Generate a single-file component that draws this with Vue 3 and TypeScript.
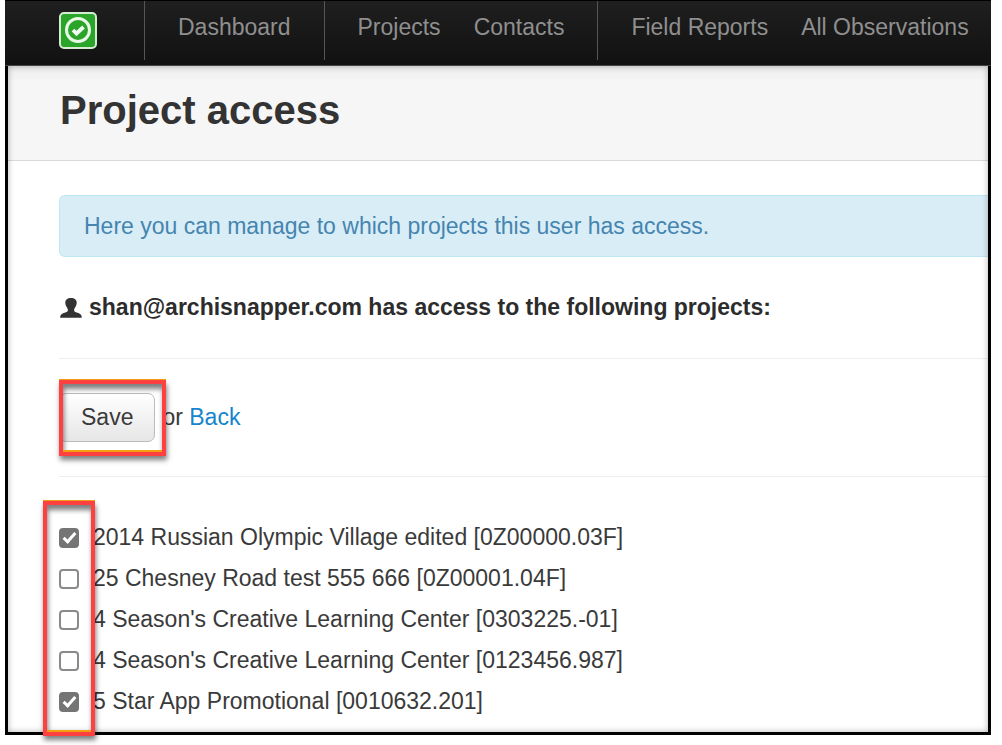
<script setup lang="ts">
import { ref } from 'vue'

interface Project {
  id: number
  name: string
  allowed: boolean
}

const navGroups: string[][] = [
  ['Dashboard'],
  ['Projects', 'Contacts'],
  ['Field Reports', 'All Observations'],
]

const projects = ref<Project[]>([
  { id: 1, name: '2014 Russian Olympic Village edited [0Z00000.03F]', allowed: true },
  { id: 2, name: '25 Chesney Road test 555 666 [0Z00001.04F]', allowed: false },
  { id: 3, name: "4 Season's Creative Learning Center [0303225.-01]", allowed: false },
  { id: 4, name: "4 Season's Creative Learning Center [0123456.987]", allowed: false },
  { id: 5, name: '5 Star App Promotional [0010632.201]', allowed: true },
])
</script>

<template>
  <div class="page">
    <nav class="navbar">
      <a class="brand" href="#" aria-label="Home">
        <svg width="38" height="38" viewBox="0 0 38 38" aria-hidden="true">
          <rect x="1" y="1" width="36" height="35" rx="4" fill="#2aa52a" stroke="#d5ecd3" stroke-width="2" />
          <circle cx="19" cy="18" r="11.5" fill="none" stroke="#e9f8e7" stroke-width="3" />
          <path d="M14 18l3.500 3.500 7-6.500" fill="none" stroke="#f2fbf0" stroke-width="3.800" />
        </svg>
      </a>
      <div v-for="(group, i) in navGroups" :key="i" class="group">
        <a v-for="item in group" :key="item" href="#">{{ item }}</a>
      </div>
    </nav>

    <div class="frame">
      <header class="heading">
        <h1>Project access</h1>
      </header>

      <main class="content">
        <p class="alert">Here you can manage to which projects this user has access.</p>

        <p class="user">
          <svg width="22" height="20" viewBox="0 0 22 20" aria-hidden="true">
            <path d="M11 0C7.400 0 5.300 1.700 5.300 4.800c0 1.800.5 2.600 1 3.600.7 1.200 1.600 2.200 1.600 3.500 0 1.700-1 2-3.300 2.800C1.700 15.700.2 16.500.2 19.800h21.600c0-3.300-1.500-4.100-4.400-5.100-2.300-.8-3.300-1.100-3.300-2.800 0-1.300.9-2.300 1.600-3.500.5-1 1-1.800 1-3.600C16.700 1.700 14.600 0 11 0z" fill="#333" />
          </svg>
          <strong>shan@archisnapper.com has access to the following projects:</strong>
        </p>

        <div class="actions">
          <div class="marked">
            <button type="button">Save</button>
            <span class="marker save-marker"></span>
          </div>
          <span>or <a href="#">Back</a></span>
        </div>

        <div class="projects">
          <label v-for="project in projects" :key="project.id">
            <input v-model="project.allowed" type="checkbox" />
            <span>{{ project.name }}</span>
          </label>
          <span class="marker list-marker"></span>
        </div>
      </main>
    </div>
  </div>
</template>

<style>
body {
  margin: 0;
  background: #fff;
}
</style>

<style scoped>
.page {
  margin: 0 11px 0 5px;
  padding-bottom: 11px;
  font-family: "Liberation Sans", Arial, sans-serif;
  font-size: 23px;
  line-height: 33px;
  color: #3a3a3a;
}

.navbar {
  box-sizing: border-box;
  display: flex;
  height: 66px;
  padding-left: 54px;
  overflow: hidden;
  background: linear-gradient(#1f1f1f, #111);
  border-top: 1px solid #000;
  border-bottom: 1px solid #444;
  white-space: nowrap;
}

.brand {
  flex: none;
  width: 85px;
  padding-top: 11px;
}

.brand svg {
  display: block;
}

.group {
  display: flex;
  flex: none;
  gap: 33px;
  height: 59px;
  box-sizing: border-box;
  padding: 10px 33px 0;
  border-left: 1px solid #555;
}

.group a {
  color: #8f8f8f;
  text-decoration: none;
}

.frame {
  position: relative;
  border: 3px solid #000;
  border-top: 0;
}

.frame::after {
  content: "";
  position: absolute;
  inset: 0;
  pointer-events: none;
  box-shadow: inset 0 0 6px rgba(0, 0, 0, 0.3);
}

.heading {
  padding: 20px 52px 25px;
  background: linear-gradient(#ececec, #f6f6f6 16px);
  border-bottom: 1px solid #d9d9d9;
}

h1 {
  margin: 0;
  font-size: 40px;
  line-height: 49px;
  color: #333;
}

.content {
  padding: 34px 0 14px 51px;
}

.alert {
  margin: 0 0 34px;
  padding: 14px 24px 13px;
  background: #d9edf7;
  border: 1px solid #bce8f1;
  border-right: 0;
  border-radius: 6px 0 0 6px;
  color: #4585b0;
}

.user {
  display: flex;
  align-items: center;
  gap: 7px;
  margin: 0;
  padding: 0 1px 34px;
}

.user strong {
  color: #2c2c2c;
}

.actions {
  display: flex;
  align-items: center;
  gap: 7px;
  padding: 34px 0;
  border: solid #eee;
  border-width: 1px 0;
}

.actions a {
  color: #1485cc;
  text-decoration: none;
}

.marked,
.projects {
  position: relative;
}

button {
  display: block;
  padding: 7px 21px;
  border: 1px solid #bbb;
  border-radius: 7px;
  background: linear-gradient(#fff, #e6e6e6);
  color: #3a3a3a;
  font: inherit;
}

.marker {
  position: absolute;
  box-sizing: border-box;
  border: 4px solid #ff4040;
  box-shadow:
    0 -1px 0 #f0a010,
    inset 0 -2px 0 #f0a010,
    1px 4px 5px rgba(0, 0, 0, 0.5),
    inset 1px 5px 5px rgba(0, 0, 0, 0.5);
  pointer-events: none;
  z-index: 1;
}

.save-marker {
  inset: -13px -11px -14px 0;
}

.projects {
  display: flex;
  flex-direction: column;
  align-items: flex-start;
  gap: 8px;
  padding-top: 44px;
}

.projects label {
  display: flex;
  align-items: center;
  gap: 14px;
}

input {
  appearance: none;
  display: grid;
  place-items: center;
  width: 20px;
  height: 20px;
  margin: 0;
  border: 2px solid #8a8a8a;
  border-radius: 4px;
  background: #fff;
}

input:checked {
  border-color: #757575;
  background: #757575;
}

input:checked::after {
  content: "";
  width: 4px;
  height: 10px;
  margin-bottom: 3px;
  border: solid #fff;
  border-width: 0 3px 3px 0;
  transform: rotate(42deg);
}

.list-marker {
  top: 24px;
  bottom: -18px;
  left: -16px;
  width: 52px;
}
</style>
